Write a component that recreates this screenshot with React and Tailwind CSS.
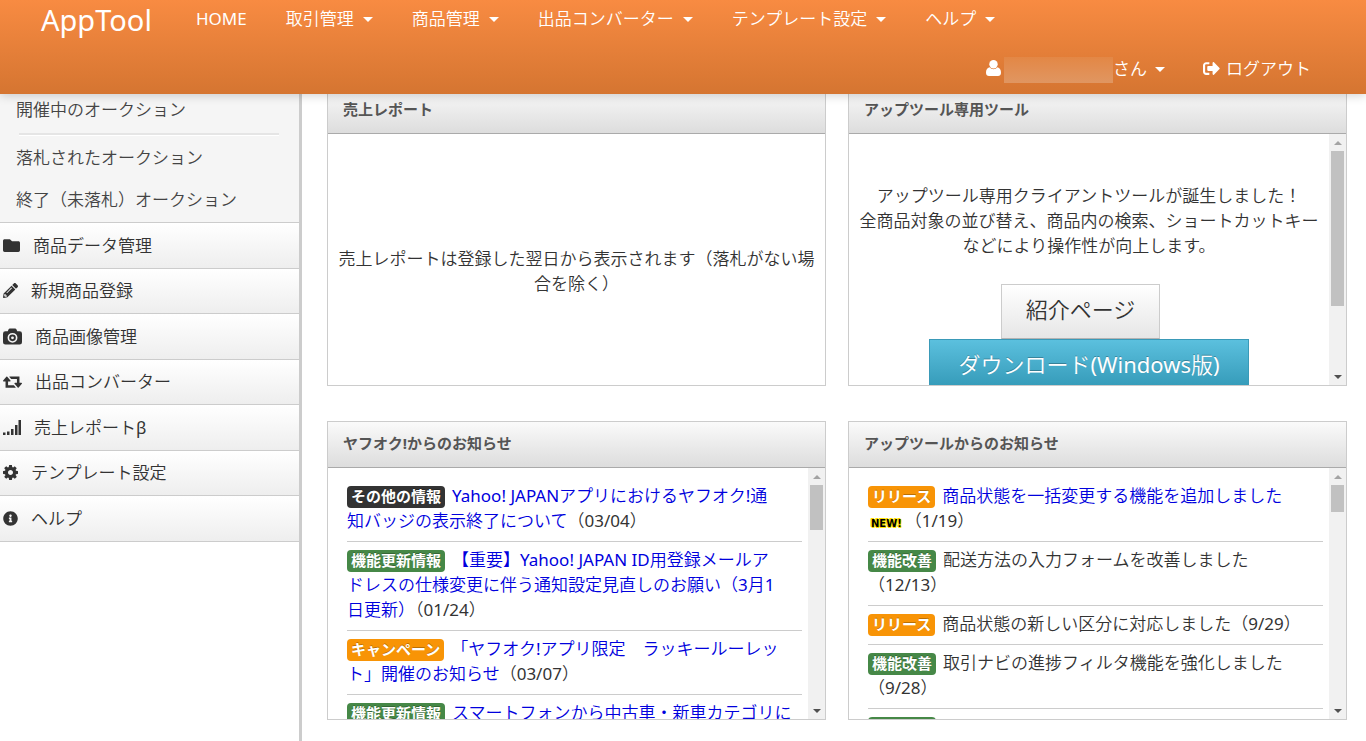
import React from 'react';
import { FaFolder, FaPencilAlt, FaInfoCircle, FaSignOutAlt } from 'react-icons/fa';

const Caret = () => (
  <svg viewBox="0 0 10 5" className="w-[10px] h-[5px] mt-[2px] shrink-0" fill="currentColor" aria-hidden="true">
    <path d="M0 0h10L5 5z" />
  </svg>
);

const UserIcon = () => (
  <svg viewBox="0 0 15 16" className="w-[15px] h-4 shrink-0" fill="currentColor" aria-hidden="true">
    <circle cx="7.5" cy="4.2" r="4.2" />
    <path d="M3.6 7.2C1 7.6 0 10 0 12.8 0 14.900 1.300 16 3 16h9c1.700 0 3-1.100 3-3.200 0-2.800-1-5.200-3.600-5.600A5.300 5.300 0 0 1 7.500 9.200 5.300 5.300 0 0 1 3.600 7.200z" />
  </svg>
);

const SignalIcon = ({ className }) => (
  <svg viewBox="0 0 18 16" className={className} fill="currentColor" aria-hidden="true">
    <path d="M0 13.500h2.500V16H0zM4 12.500h2.500V16H4zM8 10h2.500v6H8zM12 6h2.500v10H12zM15.500 1H18v15h-2.500z" />
  </svg>
);

const CameraIcon = ({ className }) => (
  <svg viewBox="0 0 20 17" className={className} fill="currentColor" aria-hidden="true">
    <path fillRule="evenodd" d="M2.500 3H5l.8-2Q6.200 0 7.300 0h5.400q1.100 0 1.500 1l.8 2h2.500Q20 3 20 5.500v9q0 2.500-2.500 2.500h-15Q0 17 0 14.500v-9Q0 3 2.500 3zM10 4.700a5.200 5.200 0 1 0 0 10.400 5.200 5.200 0 0 0 0-10.400z" />
    <path fillRule="evenodd" d="M10 6.400a3.500 3.500 0 1 1 0 7 3.500 3.500 0 0 1 0-7zM10 8.400a1.500 1.500 0 1 0 0 3 1.500 1.500 0 0 0 0-3z" />
  </svg>
);

const RetweetIcon = ({ className }) => (
  <svg viewBox="0 384 1920 1280" className={className} fill="currentColor" aria-hidden="true">
    <path d="M1280 1632q0 13-9.500 22.500t-22.500 9.500h-960q-8 0-13.500-2t-9-7-5.500-8-3-11.500-1-11.500v-600h-192q-26 0-45-19t-19-45q0-24 15-41l320-384q19-22 49-22t49 22l320 384q15 17 15 41 0 26-19 45t-45 19h-192v384h576q16 0 25 11l160 192q7 10 7 21zm640-416q0 24-15 41l-320 384q-20 23-49 23t-49-23l-320-384q-15-17-15-41 0-26 19-45t45-19h192v-384h-576q-16 0-25-12l-160-192q-7-9-7-20 0-13 9.500-22.500t22.500-9.500h960q8 0 13.500 2t9 7 5.500 8 3 11.500 1 11.500v600h192q26 0 45 19t19 45z" />
  </svg>
);

const CogIcon = ({ className }) => (
  <svg viewBox="0 128 1536 1536" className={className} fill="currentColor" aria-hidden="true">
    <path d="M1024 896q0-106-75-181t-181-75-181 75-75 181 75 181 181 75 181-75 75-181zm512-109v222q0 12-8 23t-20 13l-185 28q-19 54-39 91 35 50 107 138 10 12 10 25t-9 23q-27 37-99 108t-94 71q-12 0-26-9l-138-108q-44 23-91 38-16 136-29 186-7 28-36 28h-222q-14 0-24.500-8.500t-11.500-21.500l-28-184q-49-16-90-37l-141 107q-10 9-25 9-14 0-25-11-126-114-165-168-7-10-7-23 0-12 8-23 15-21 51-66.500t54-70.500q-27-50-41-99l-183-27q-13-2-21-12.500t-8-23.500v-222q0-12 8-23t19-13l186-28q14-46 39-92-40-57-107-138-10-12-10-24 0-10 9-23 26-36 98.500-107.500t94.500-71.500q13 0 26 10l138 107q44-23 91-38 16-136 29-186 7-28 36-28h222q14 0 24.500 8.500t11.500 21.500l28 184q49 16 90 37l142-107q9-9 24-9 13 0 25 10 129 119 165 170 7 8 7 22 0 12-8 23-15 21-51 66.500t-54 70.500q26 50 41 98l183 28q13 2 21 12.500t8 23.500z" />
  </svg>
);

const navItems = ['取引管理', '商品管理', '出品コンバーター', 'テンプレート設定', 'ヘルプ'];

const sideItems = [
  { label: '商品データ管理', Icon: FaFolder, size: 'w-[17px] h-[17px]' },
  { label: '新規商品登録', Icon: FaPencilAlt, size: 'w-[15px] h-[15px]' },
  { label: '商品画像管理', Icon: CameraIcon, size: 'w-[19px] h-[17px]' },
  { label: '出品コンバーター', Icon: RetweetIcon, size: 'w-[19px] h-[13px]' },
  { label: '売上レポートβ', Icon: SignalIcon, size: 'w-[18px] h-4' },
  { label: 'テンプレート設定', Icon: CogIcon, size: 'w-[15px] h-[15px]' },
  { label: 'ヘルプ', Icon: FaInfoCircle, size: 'w-[15px] h-[15px]' }
];

const yahooNews = [
  { tag: 'その他の情報', color: 'bg-[#333333]', text: 'Yahoo! JAPANアプリにおけるヤフオク!通\n知バッジの表示終了について', date: '（03/04）', link: true },
  { tag: '機能更新情報', color: 'bg-[#468847]', text: '【重要】Yahoo! JAPAN ID用登録メールア\nドレスの仕様変更に伴う通知設定見直しのお願い（3月1\n日更新）', date: '（01/24）', link: true },
  { tag: 'キャンペーン', color: 'bg-[#f89406]', text: '「ヤフオク!アプリ限定　ラッキールーレッ\nト」開催のお知らせ', date: '（03/07）', link: true },
  { tag: '機能更新情報', color: 'bg-[#468847]', text: 'スマートフォンから中古車・新車カテゴリに', date: '', link: true }
];

const appNews = [
  { tag: 'リリース', color: 'bg-[#f89406]', text: '商品状態を一括変更する機能を追加しました', date: '（1/19）', link: true, isNew: true },
  { tag: '機能改善', color: 'bg-[#468847]', text: '配送方法の入力フォームを改善しました\n', date: '（12/13）' },
  { tag: 'リリース', color: 'bg-[#f89406]', text: '商品状態の新しい区分に対応しました', date: '（9/29）' },
  { tag: '機能改善', color: 'bg-[#468847]', text: '取引ナビの進捗フィルタ機能を強化しました\n', date: '（9/28）' },
  { tag: '', color: 'bg-[#468847] w-[68px]', text: '', date: '' }
];

const ScrollBar = ({ thumb }) => (
  <div className="w-[17px] shrink-0 bg-[#f1f1f1] flex flex-col items-center" aria-hidden="true">
    <span className="h-[17px] flex items-center text-[#a3a3a3]">
      <svg viewBox="0 0 8 4" className="w-2 h-1" fill="currentColor"><path d="M0 4h8L4 0z" /></svg>
    </span>
    <span className={`w-[13px] bg-[#c1c1c1] ${thumb}`} />
    <span className="h-[17px] mt-auto flex items-center text-[#505050]">
      <svg viewBox="0 0 8 4" className="w-2 h-1" fill="currentColor"><path d="M0 0h8L4 4z" /></svg>
    </span>
  </div>
);

const Panel = ({ title, thumb, children }) => (
  <section className="h-[299px] flex flex-col border border-[#cccccc] bg-white min-w-0">
    <h2 className="h-[46px] shrink-0 px-[15px] pb-[2px] flex items-center font-['Noto_Sans','Noto_Sans_CJK_JP',sans-serif] text-[15px] font-bold text-[#555555] bg-linear-to-b from-[#fafafa] to-[#dddddd] border-b border-[#aaaaaa]">
      {title}
    </h2>
    <div className="flex-1 min-h-0 flex overflow-hidden">
      <div className="flex-1 min-w-0 overflow-hidden">{children}</div>
      {thumb && <ScrollBar thumb={thumb} />}
    </div>
  </section>
);

const NewsList = ({ items }) => (
  <ul className="pt-[10px] pl-[19px] pr-[6px]">
    {items.map((item, i) => (
      <li key={i} className="pt-[5px] pb-2 border-b border-[#cccccc] whitespace-pre-line">
        <span className={`inline-block h-[22px] px-1 mr-[7px] rounded-[4px] align-bottom font-['Noto_Sans','Noto_Sans_CJK_JP',sans-serif] text-[15px] leading-5 font-bold text-white [text-shadow:0_-1px_0_rgba(0,0,0,0.25)] ${item.color}`}>
          {item.tag}
        </span>
        {item.link ? <a href="#" className="text-[#0000dd]">{item.text}</a> : item.text}
        {item.isNew && (
          <>
            <br />
            <span className="inline-block px-[3px] font-['DejaVu_Sans'] text-[10px] leading-4 font-bold text-black [text-shadow:1px_0_#ffe100,-1px_0_#ffe100,0_1px_#ffe100,0_-1px_#ffe100,1px_1px_#ffe100,-1px_-1px_#ffe100]">
              NEW!
            </span>
          </>
        )}
        {item.date}
      </li>
    ))}
  </ul>
);

const Header = () => (
  <header className="sticky top-0 z-10 text-white bg-linear-to-b from-[#f88b42] to-[#d57531] shadow-[0_1px_10px_rgba(0,0,0,0.2)]">
    <div className="h-11 pb-2 pl-[41px] flex items-center">
      <a href="#" className="w-[155px] pt-1 text-[29px] leading-8">AppTool</a>
      <nav className="flex items-center gap-[39px]">
        <a href="#">HOME</a>
        {navItems.map((label) => (
          <button key={label} type="button" className="flex items-center gap-[9px] whitespace-nowrap">
            {label}
            <Caret />
          </button>
        ))}
      </nav>
    </div>
    <div className="h-[50px] pr-[55px] pb-[2px] flex items-center justify-end gap-[38px]">
      <button type="button" className="flex items-center">
        <UserIcon />
        <span className="w-[109px] h-[26px] ml-[3px] mt-1 bg-linear-to-b from-[#e38745] to-[#e09661]" />
        さん
        <span className="pl-2"><Caret /></span>
      </button>
      <a href="#" className="flex items-center gap-[6px]">
        <FaSignOutAlt className="w-[17px] h-[17px]" />
        ログアウト
      </a>
    </div>
  </header>
);

const Sidebar = () => (
  <aside className="w-[302px] shrink-0 border-r-3 border-[#cccccc]">
    <ul className="h-[135px] pl-4 pr-5 bg-[#f5f5f5] text-[#444444]">
      <li className="h-[46px] pb-[2px] flex items-center"><a href="#">開催中のオークション</a></li>
      <li className="h-[3px] ml-[3px] bg-[#e5e5e5] border-b border-white" role="separator" />
      <li className="h-[42px] flex items-center"><a href="#">落札されたオークション</a></li>
      <li className="h-[42px] flex items-center"><a href="#">終了（未落札）オークション</a></li>
    </ul>
    <ul className="border-t border-[#cccccc]">
      {sideItems.map(({ label, Icon, size }) => (
        <li key={label} className="odd:h-[46px] even:h-[45px] border-b border-[#cccccc] bg-linear-to-b from-white to-[#eeeeee]">
          <a href="#" className="h-full pl-[3px] pb-[1px] flex items-center gap-[13px]">
            <Icon className={`shrink-0 ${size}`} />
            {label}
          </a>
        </li>
      ))}
    </ul>
  </aside>
);

export default function App() {
  return (
    <div className="h-screen overflow-hidden flex flex-col bg-white text-[#333333] text-[17px] leading-[25px] font-normal font-['Noto_Sans','Noto_Sans_CJK_JP_DemiLight','Noto_Sans_CJK_JP',sans-serif]">
      <Header />
      {/* content is scrolled slightly under the fixed header */}
      <div className="-mt-[7px] flex-1 flex">
        <Sidebar />
        <main className="flex-1 min-w-0 pl-[25px] pr-[19px] grid grid-cols-2 gap-x-[22px] gap-y-[35px] content-start">
          <Panel title="売上レポート">
            <p className="pt-28 text-center">
              売上レポートは登録した翌日から表示されます（落札がない場
              <br />
              合を除く）
            </p>
          </Panel>
          <Panel title="アップツール専用ツール" thumb="h-[155px]">
            <div className="pt-[49px] text-center">
              <p className="mb-[26px]">
                アップツール専用クライアントツールが誕生しました！
                <br />
                全商品対象の並び替え、商品内の検索、ショートカットキー
                <br />
                などにより操作性が向上します。
              </p>
              <div className="flex flex-col items-center text-[22px]">
                <div className="flex">
                  <button type="button" className="h-[55px] px-6 pb-1 border border-[#cccccc] border-b-[#b3b3b3] bg-linear-to-b from-white to-[#e6e6e6]">
                    紹介ページ
                  </button>
                  <span className="text-[17px]">　</span>
                </div>
                <button type="button" className="h-[55px] px-7 pb-1 text-white border border-[#3a9ab8] bg-linear-to-b from-[#5bc0de] to-[#2f96b4] [text-shadow:0_-1px_0_rgba(0,0,0,0.25)]">
                  ダウンロード(Windows版)
                </button>
              </div>
            </div>
          </Panel>
          <Panel title="ヤフオク!からのお知らせ" thumb="h-[45px]">
            <NewsList items={yahooNews} />
          </Panel>
          <Panel title="アップツールからのお知らせ" thumb="h-[27px]">
            <NewsList items={appNews} />
          </Panel>
        </main>
      </div>
    </div>
  );
}
